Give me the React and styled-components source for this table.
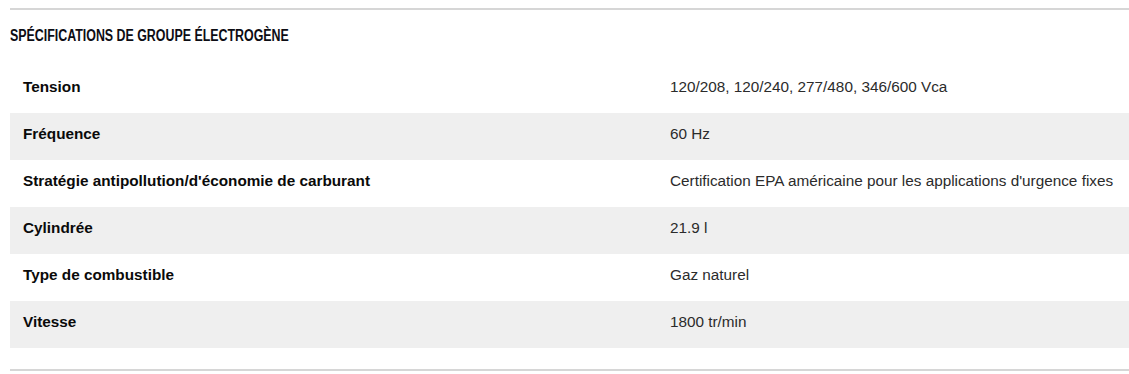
import React from 'react'
import styled, { createGlobalStyle } from 'styled-components'

const specs = [
    ['Tension', '120/208, 120/240, 277/480, 346/600 Vca'],
    ['Fréquence', '60 Hz'],
    ["Stratégie antipollution/d'économie de carburant", "Certification EPA américaine pour les applications d'urgence fixes"],
    ['Cylindrée', '21.9 l'],
    ['Type de combustible', 'Gaz naturel'],
    ['Vitesse', '1800 tr/min'],
]

const GlobalStyle = createGlobalStyle`
  body {
    margin: 0;
    background: #fff;
    font-family: 'Liberation Sans', Arial, sans-serif;
  }
`

const Section = styled.section`
  margin: 8px 0 0 10px;
  border-top: 2px solid #d6d6d6;
  border-bottom: 2px solid #d6d6d6;
  padding-bottom: 21px;
`

const Heading = styled.h2`
  margin: 0;
  padding: 16px 0 0;
  height: 38px;
  box-sizing: border-box;
  font-family: 'Liberation Sans', Arial, sans-serif;
  font-weight: 700;
  font-size: 16px;
  line-height: 20px;
  color: #0d0d14;
  white-space: nowrap;
  transform: scaleX(0.775);
  transform-origin: left center;
`

const Table = styled.div`
  margin-top: 18px;
  display: grid;
  grid-template-columns: 647px 1fr;
`

const Row = styled.div`
  display: contents;

  & > div {
    background: ${p => (p.$shaded ? '#efefef' : '#fff')};
  }
`

const Cell = styled.div`
  height: 47px;
  box-sizing: border-box;
  padding: 0 13px 6px;
  display: flex;
  align-items: center;
  font-size: 15.3px;
  white-space: nowrap;
  font-weight: ${p => (p.$label ? 700 : 400)};
  color: ${p => (p.$label ? '#0a0a0a' : '#2b2b2b')};
`

const App = () => (
    <>
        <GlobalStyle />
        <Section>
            <Heading>SPÉCIFICATIONS DE GROUPE ÉLECTROGÈNE</Heading>
            <Table>
                {specs.map(([label, value], i) => (
                    <Row key={label} $shaded={i % 2 === 1}>
                        <Cell $label>{label}</Cell>
                        <Cell>{value}</Cell>
                    </Row>
                ))}
            </Table>
        </Section>
    </>
)

export default App
